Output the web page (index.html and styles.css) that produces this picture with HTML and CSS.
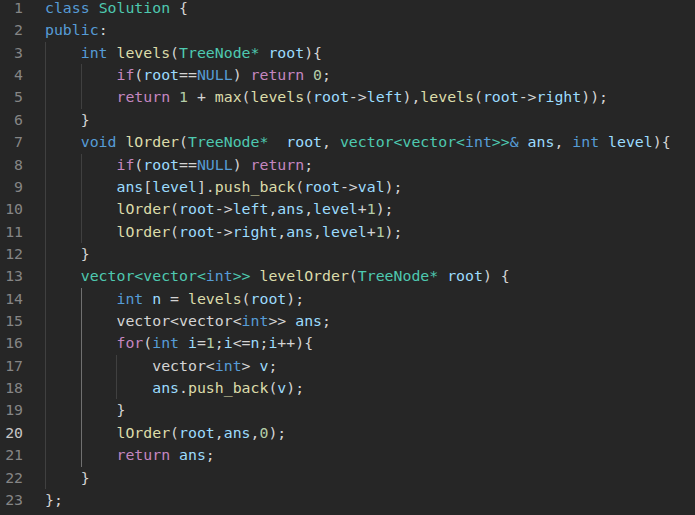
FILE: index.html
```html
<!DOCTYPE html>
<html lang="en">
<head>
<meta charset="utf-8">
<title>Solution</title>
<link rel="stylesheet" href="styles.css">
</head>
<body>
<div class="editor">
<div class="row"><span class="ln">1</span><span class="code"><span class="k">class</span> <span class="t">Solution</span> {</span></div>
<div class="row"><span class="ln">2</span><span class="code"><span class="k">public</span>:</span></div>
<div class="row"><span class="ln">3</span><span class="g"></span><span class="code"><span class="k">int</span> <span class="f">levels</span>(<span class="t">TreeNode*</span> <span class="v">root</span>){</span></div>
<div class="row"><span class="ln">4</span><span class="g"></span><span class="g"></span><span class="code"><span class="c">if</span>(<span class="v">root</span>==<span class="k">NULL</span>) <span class="c">return</span> <span class="n">0</span>;</span></div>
<div class="row"><span class="ln">5</span><span class="g"></span><span class="g"></span><span class="code"><span class="c">return</span> <span class="n">1</span> + <span class="f">max</span>(<span class="f">levels</span>(<span class="v">root</span>-&gt;<span class="v">left</span>),<span class="f">levels</span>(<span class="v">root</span>-&gt;<span class="v">right</span>));</span></div>
<div class="row"><span class="ln">6</span><span class="g"></span><span class="code">}</span></div>
<div class="row"><span class="ln">7</span><span class="g"></span><span class="code"><span class="k">void</span> <span class="f">lOrder</span>(<span class="t">TreeNode*</span>  <span class="v">root</span>, <span class="t">vector&lt;vector&lt;</span><span class="k">int</span><span class="t">&gt;&gt;</span><span class="k">&amp;</span> <span class="v">ans</span>, <span class="k">int</span> <span class="v">level</span>){</span></div>
<div class="row"><span class="ln">8</span><span class="g"></span><span class="g"></span><span class="code"><span class="c">if</span>(<span class="v">root</span>==<span class="k">NULL</span>) <span class="c">return</span>;</span></div>
<div class="row"><span class="ln">9</span><span class="g"></span><span class="g"></span><span class="code"><span class="v">ans</span>[<span class="v">level</span>].<span class="f">push_back</span>(<span class="v">root</span>-&gt;<span class="v">val</span>);</span></div>
<div class="row"><span class="ln">10</span><span class="g"></span><span class="g"></span><span class="code"><span class="f">lOrder</span>(<span class="v">root</span>-&gt;<span class="v">left</span>,<span class="v">ans</span>,<span class="v">level</span>+<span class="n">1</span>);</span></div>
<div class="row"><span class="ln">11</span><span class="g"></span><span class="g"></span><span class="code"><span class="f">lOrder</span>(<span class="v">root</span>-&gt;<span class="v">right</span>,<span class="v">ans</span>,<span class="v">level</span>+<span class="n">1</span>);</span></div>
<div class="row"><span class="ln">12</span><span class="g"></span><span class="code">}</span></div>
<div class="row"><span class="ln">13</span><span class="g"></span><span class="code"><span class="t">vector&lt;vector&lt;</span><span class="k">int</span><span class="t">&gt;&gt;</span> <span class="f">levelOrder</span>(<span class="t">TreeNode*</span> <span class="v">root</span>) {</span></div>
<div class="row"><span class="ln">14</span><span class="g"></span><span class="g active"></span><span class="code"><span class="k">int</span> <span class="v">n</span> = <span class="f">levels</span>(<span class="v">root</span>);</span></div>
<div class="row"><span class="ln">15</span><span class="g"></span><span class="g active"></span><span class="code">vector&lt;vector&lt;<span class="k">int</span>&gt;&gt; <span class="v">ans</span>;</span></div>
<div class="row"><span class="ln">16</span><span class="g"></span><span class="g active"></span><span class="code"><span class="c">for</span>(<span class="k">int</span> <span class="v">i</span>=<span class="n">1</span>;<span class="v">i</span>&lt;=<span class="v">n</span>;<span class="v">i</span>++){</span></div>
<div class="row"><span class="ln">17</span><span class="g"></span><span class="g active"></span><span class="g"></span><span class="code">vector&lt;<span class="k">int</span>&gt; <span class="v">v</span>;</span></div>
<div class="row"><span class="ln">18</span><span class="g"></span><span class="g active"></span><span class="g"></span><span class="code"><span class="v">ans</span>.<span class="f">push_back</span>(<span class="v">v</span>);</span></div>
<div class="row"><span class="ln">19</span><span class="g"></span><span class="g active"></span><span class="code">}</span></div>
<div class="row"><span class="ln cur">20</span><span class="g"></span><span class="g active"></span><span class="code"><span class="f">lOrder</span>(<span class="v">root</span>,<span class="v">ans</span>,<span class="n">0</span>);</span></div>
<div class="row"><span class="ln">21</span><span class="g"></span><span class="g active"></span><span class="code"><span class="c">return</span> <span class="v">ans</span>;</span></div>
<div class="row"><span class="ln">22</span><span class="g"></span><span class="code">}</span></div>
<div class="row"><span class="ln">23</span><span class="code">};</span></div>
</div>
</body>
</html>
```

FILE: styles.css
```css
html, body {
  margin: 0;
  padding: 0;
  background: #262626;
  height: 100%;
  overflow: hidden;
}

.editor {
  margin-top: -3px;
  font-family: "DejaVu Sans Mono", "Liberation Mono", monospace;
  font-size: 14.85px;
  color: #d4d4d4;
}

.row {
  display: flex;
  height: 22.36px;
  line-height: 22.36px;
}

.ln {
  width: 23px;
  margin-right: 22px;
  text-align: right;
  color: #858585;
  flex: none;
}

.ln.cur {
  color: #c6c6c6;
}

.g {
  flex: none;
  width: 4ch;
  box-sizing: border-box;
  border-left: 1px solid #404040;
}

.g.active {
  border-left-color: #707070;
}

.code {
  white-space: pre;
}

.k { color: #569cd6; }
.t { color: #4ec9b0; }
.f { color: #dcdcaa; }
.v { color: #9cdcfe; }
.c { color: #c586c0; }
.n { color: #b5cea8; }
```
